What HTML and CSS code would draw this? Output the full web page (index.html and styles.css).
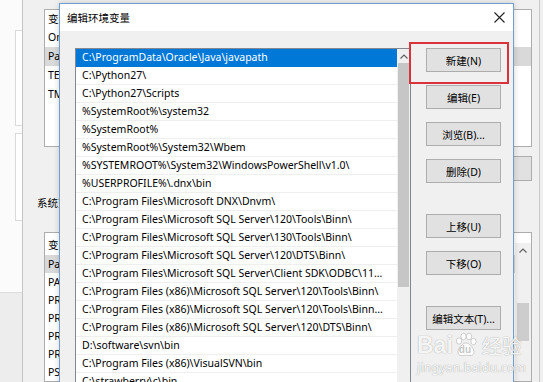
FILE: index.html
```html
<!DOCTYPE html>
<html lang="zh-CN">
<head>
  <meta charset="UTF-8">
  <title>编辑环境变量</title>
<link rel="stylesheet" href="styles.css">
</head>
<body>

  <div class="desk">

    <!-- system properties window, far behind -->
    <div class="sysprop">
      <div class="sys-box sys-box-a"></div>
      <div class="sys-box sys-box-b"></div>
      <div class="sys-foot"></div>
    </div>

    <!-- environment variables window, behind the dialog -->
    <div class="envwin">
      <div class="env-list env-list-user">
        <div class="env-head">变量</div>
        <div class="env-row">OneDrive</div>
        <div class="env-row is-picked">Path</div>
        <div class="env-row">TEMP</div>
        <div class="env-row">TMP</div>
      </div>
      <div class="env-btns"><span class="env-btn">删除(D)</span></div>
      <div class="env-label">系统变量(S)</div>
      <div class="env-list env-list-sys">
        <div class="env-sys-rows">
          <div class="env-head">变量</div>
          <div class="env-row is-picked">Path</div>
          <div class="env-row">PATHEXT</div>
          <div class="env-row">PROCESSOR_ARCHITECTURE</div>
          <div class="env-row">PROCESSOR_IDENTIFIER</div>
          <div class="env-row">PROCESSOR_LEVEL</div>
          <div class="env-row">PROCESSOR_REVISION</div>
          <div class="env-row">PSModulePath</div>
        </div>
        <div class="env-scroll">
          <div class="scroll-up">
            <svg width="8" height="5" viewBox="0 0 8 5"><polyline points="0.5,4.5 4,1 7.5,4.5" fill="none" stroke="#606060" stroke-width="1.2"/></svg>
          </div>
          <div class="env-thumb"></div>
        </div>
      </div>
    </div>

    <!-- edit environment variable dialog -->
    <div class="dialog">
      <div class="title-bar">
        <span class="title">编辑环境变量</span>
        <span class="close">
          <svg width="11" height="11" viewBox="0 0 11 11"><path d="M0.5 0.5 L10.5 10.5 M10.5 0.5 L0.5 10.5" stroke="#222" stroke-width="1.1"/></svg>
        </span>
      </div>

      <div class="dialog-body">
        <div class="path-list">
          <div class="path-rows">
            <div class="path-row is-selected">C:\ProgramData\Oracle\Java\javapath</div>
            <div class="path-row">C:\Python27\</div>
            <div class="path-row">C:\Python27\Scripts</div>
            <div class="path-row">%SystemRoot%\system32</div>
            <div class="path-row">%SystemRoot%</div>
            <div class="path-row">%SystemRoot%\System32\Wbem</div>
            <div class="path-row">%SYSTEMROOT%\System32\WindowsPowerShell\v1.0\</div>
            <div class="path-row">%USERPROFILE%\.dnx\bin</div>
            <div class="path-row">C:\Program Files\Microsoft DNX\Dnvm\</div>
            <div class="path-row">C:\Program Files\Microsoft SQL Server\120\Tools\Binn\</div>
            <div class="path-row">C:\Program Files\Microsoft SQL Server\130\Tools\Binn\</div>
            <div class="path-row">C:\Program Files\Microsoft SQL Server\120\DTS\Binn\</div>
            <div class="path-row">C:\Program Files\Microsoft SQL Server\Client SDK\ODBC\11...</div>
            <div class="path-row">C:\Program Files (x86)\Microsoft SQL Server\120\Tools\Binn\</div>
            <div class="path-row">C:\Program Files (x86)\Microsoft SQL Server\120\Tools\Binn...</div>
            <div class="path-row">C:\Program Files (x86)\Microsoft SQL Server\120\DTS\Binn\</div>
            <div class="path-row">D:\software\svn\bin</div>
            <div class="path-row">C:\Program Files (x86)\VisualSVN\bin</div>
            <div class="path-row path-row-cut">C:\strawberry\c\bin</div>
          </div>
          <div class="scrollbar">
            <div class="scroll-up">
              <svg width="8" height="5" viewBox="0 0 8 5"><polyline points="0.5,4.5 4,1 7.5,4.5" fill="none" stroke="#606060" stroke-width="1.2"/></svg>
            </div>
            <div class="scroll-thumb"></div>
          </div>
        </div>

        <div class="actions">
          <button class="btn">新建(N)</button>
          <button class="btn">编辑(E)</button>
          <button class="btn">浏览(B)...</button>
          <button class="btn">删除(D)</button>
          <button class="btn btn-group">上移(U)</button>
          <button class="btn">下移(O)</button>
          <button class="btn btn-group">编辑文本(T)...</button>
        </div>
      </div>

      <div class="highlight"></div>

      <div class="watermark">
        <div class="wm-logo">
          <span class="wm-bai">Bai</span>
          <span class="wm-paw">
            <svg width="26" height="26" viewBox="0 0 26 26">
              <ellipse cx="6" cy="9" rx="2.6" ry="3.2"/>
              <ellipse cx="10.5" cy="4.5" rx="2.6" ry="3.3"/>
              <ellipse cx="16" cy="4.5" rx="2.6" ry="3.3"/>
              <ellipse cx="20.5" cy="9.5" rx="2.6" ry="3.2"/>
              <path d="M13 11 C9 11 5 17 5 20 C5 24 9 24 13 23 C17 24 21 24 21 20 C21 17 17 11 13 11 Z"/>
            </svg>
            <span class="wm-du">du</span>
          </span>
          <span class="wm-jy">经验</span>
        </div>
        <div class="wm-url">jingyan.baidu.com</div>
      </div>
    </div>

  </div>

</body>
</html>
```

FILE: styles.css
```css
html {
  font-size: 10.5px; /* Windows dialog text, scaled */
}

body {
  margin: 0;
  font-family: 'Noto Sans', 'Noto Sans CJK SC', sans-serif;
  background-color: #f0f0f0;
  color: #000;
}

.desk {
  position: relative;
  width: 543px;
  height: 382px;
  overflow: hidden;
}

/* far window on the left */
.sysprop {
  position: absolute;
  left: 0;
  top: 0;
  width: 40px;
  height: 382px;
  background-color: #fbfbfb;
}

.sys-box {
  position: absolute;
  left: 15px;
  width: 40px;
  border: 1px solid #dadada;
  background-color: #fff;
}

.sys-box-a {
  top: 30px;
  height: 94px;
}

.sys-box-b {
  top: 133px;
  height: 86px;
}

.sys-foot {
  position: absolute;
  left: 0;
  right: 0;
  top: 292px;
  bottom: 0;
  background-color: #ededed;
  border-top: 1px solid #dcdcdc;
}

/* environment variables window */
.envwin {
  position: absolute;
  left: 22px;
  top: 0;
  width: 518px;
  height: 382px;
  box-sizing: border-box;
  padding: 9px 7px 0 14px;
  background-color: #f0f0f0;
  border-left: 1px solid #c4c4c4;
  border-right: 1px solid #c9c9c9;
  display: flex;
  flex-direction: column;
}

.env-list {
  margin-left: 7px;
  background-color: #fff;
  border: 1px solid #adadad;
}

.env-list-user {
  height: 154px;
  box-sizing: border-box;
}

.env-head,
.env-row {
  white-space: nowrap;
  padding-left: 3px;
}

.env-head {
  height: 18px;
  line-height: 18px;
}

.env-row {
  height: 19px;
  line-height: 19px;
}

.env-row.is-picked {
  background-color: #d9d9d9;
}

.env-btns {
  display: flex;
  justify-content: flex-end;
  margin-top: 9px;
}

.env-btn {
  width: 75px;
  height: 25px;
  box-sizing: border-box;
  border: 1px solid #adadad;
  background-color: #e1e1e1;
  display: flex;
  align-items: center;
  justify-content: center;
}

.env-label {
  margin-top: 15px;
  height: 14px;
  line-height: 14px;
}

.env-list-sys {
  margin-top: 22px;
  flex: 1;
  display: flex;
}

.env-sys-rows {
  flex: 1;
}

.env-list-sys .env-head {
  height: 22px;
  line-height: 24px;
}

.env-list-sys .env-row {
  height: 18px;
  line-height: 18px;
}

.env-scroll {
  width: 16px;
  margin-top: 10px;
  background-color: #f0f0f0;
}

.env-thumb {
  height: 38px;
  margin: 46px 2px 0;
  background-color: #cdcdcd;
}

/* dialog */
.dialog {
  position: absolute;
  left: 59px;
  top: 3px;
  width: 455px;
  height: 400px;
  box-sizing: border-box;
  border: 1px solid #6f9fd2;
  background-color: #f0f0f0;
  box-shadow: 0 0 6px rgba(0, 0, 0, 0.18);
}

.title-bar {
  height: 27px;
  background-color: #fff;
  display: flex;
  align-items: center;
  padding-left: 7px;
}

.title {
  flex: 1;
}

.close {
  width: 28px;
  height: 27px;
  display: flex;
  align-items: center;
  justify-content: center;
}

.dialog-body {
  display: flex;
  gap: 15px;
  padding: 17px 12px 0 15px;
}

.path-list {
  width: 336px;
  height: 350px;
  box-sizing: border-box;
  border: 1px solid #828790;
  background-color: #fff;
  display: flex;
  overflow: hidden;
}

.path-rows {
  width: 321px;
}

.path-row {
  height: 18px;
  line-height: 17px;
  box-sizing: border-box;
  padding: 0 6px;
  border-bottom: 1px solid #efefef;
  white-space: nowrap;
  overflow: hidden;
}

.path-row.is-selected {
  background-color: #0078d7;
  border-bottom-color: #0078d7;
  color: #fff;
}

.path-row-cut {
  border-bottom: 0;
}

.scrollbar {
  width: 13px;
  background-color: #f0f0f0;
}

.scroll-up {
  height: 14px;
  display: flex;
  align-items: center;
  justify-content: center;
}

.scroll-thumb {
  height: 224px;
  margin: 0 1px;
  background-color: #c6c6c6;
}

.actions {
  width: 75px;
  display: flex;
  flex-direction: column;
  gap: 13px;
}

.btn {
  height: 24px;
  padding: 0;
  font-family: inherit;
  font-size: 1rem;
  color: #000;
  background-color: #e1e1e1;
  border: 1px solid #adadad;
}

.btn-group {
  margin-top: 18px;
}

/* red mark drawn over the screenshot */
.highlight {
  position: absolute;
  left: 349px;
  top: 38px;
  width: 100px;
  height: 42px;
  box-sizing: border-box;
  border: 2.5px solid #d8333b;
}

/* site watermark */
.watermark {
  position: absolute;
  left: 357px;
  top: 327px;
  color: rgba(255, 255, 255, 0.92);
  text-shadow: 0 0 1px rgba(80, 80, 80, 0.6);
}

.wm-logo {
  display: flex;
  align-items: center;
  height: 28px;
}

.wm-bai {
  font-family: 'Liberation Sans', sans-serif;
  font-size: 23px;
  font-weight: bold;
}

.wm-paw {
  position: relative;
  width: 26px;
  height: 26px;
}

.wm-paw svg {
  fill: rgba(255, 255, 255, 0.9);
  stroke: rgba(80, 80, 80, 0.35);
  stroke-width: 0.7;
}

.wm-du {
  position: absolute;
  left: 6px;
  top: 12px;
  font-family: 'Liberation Sans', sans-serif;
  font-size: 10px;
  font-weight: bold;
  color: rgba(190, 190, 190, 0.9);
  text-shadow: none;
}

.wm-jy {
  margin-left: 3px;
  font-size: 20px;
}

.wm-url {
  font-size: 12px;
  letter-spacing: 0.3px;
}
```
